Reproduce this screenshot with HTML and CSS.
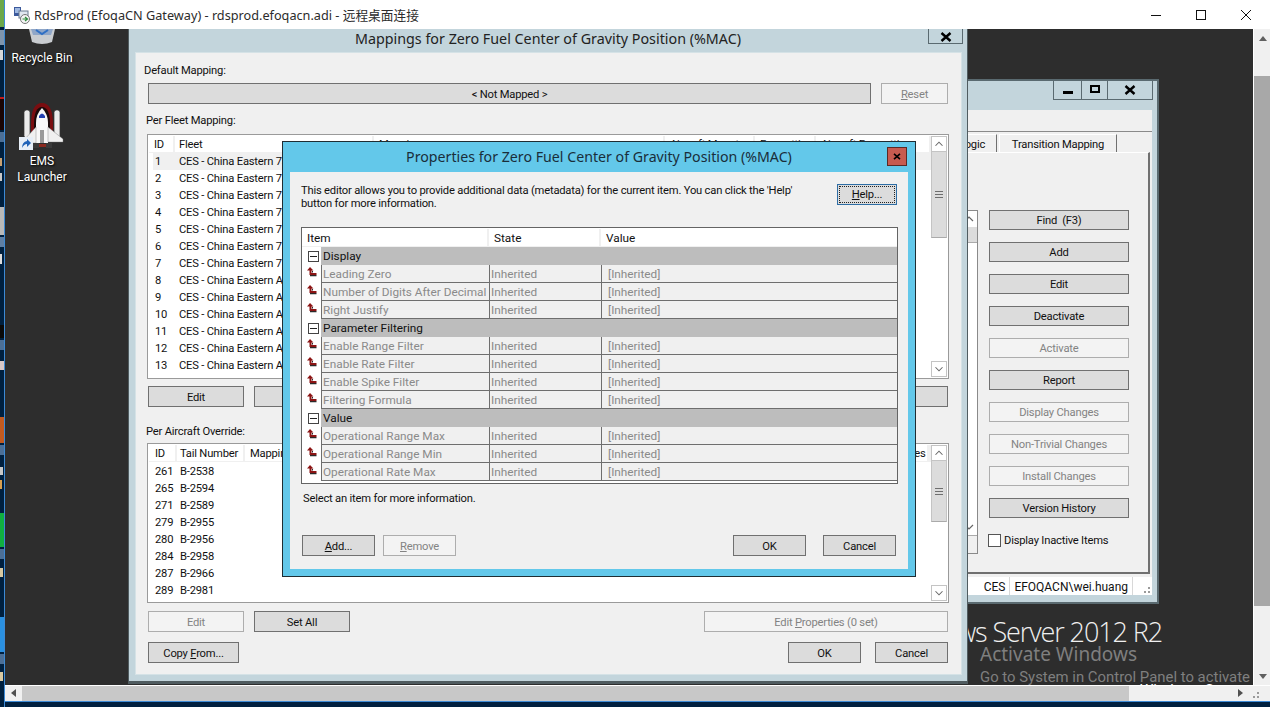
FILE: index.html
```html
<!DOCTYPE html>
<html lang="en">
<head>
    <meta charset="UTF-8">
    <title>RdsProd (EfoqaCN Gateway) - rdsprod.efoqacn.adi</title>
    <link rel="stylesheet" href="styles.css">
</head>
<body>
    <svg width="0" height="0" class="defs">
        <symbol id="inherit" viewBox="0 0 10 10">
            <path d="M3 0 L6.5 3.5 H4.5 V6 H9.5 V8 H2.5 V3.5 H0 Z" fill="#8c1414"/>
            <path d="M3 8 H9.5 V9.2 H3 Z M5 4 H6 V5.5 H5 Z" fill="#2a2a2a"/>
        </symbol>
        <symbol id="up" viewBox="0 0 16 16"><path d="M4 10 L8 6 L12 10" fill="none" stroke="#666" stroke-width="1.2"/></symbol>
        <symbol id="down" viewBox="0 0 16 16"><path d="M4 6 L8 10 L12 6" fill="none" stroke="#666" stroke-width="1.2"/></symbol>
        <symbol id="bigx" viewBox="0 0 12 10"><path d="M1.5 1 L10.5 9 M10.5 1 L1.5 9" stroke="#000" stroke-width="2.4"/></symbol>
    </svg>

    <svg class="edge" width="5" height="707" viewBox="0 0 5 707">
        <rect width="5" height="707" fill="#00203f"/>
        <rect y="0" width="4" height="27" fill="#6ca94a"/>
        <rect y="30" width="4" height="15" fill="#7f95ad"/>
        <rect y="50" width="3" height="10" fill="#d8d8d8"/>
        <rect y="97" width="4" height="33" fill="#1a0505"/>
        <rect y="97" width="4" height="2" fill="#c01818"/>
        <rect y="132" width="4" height="10" fill="#4c6f96"/>
        <rect y="158" width="2" height="8" fill="#c8a070"/>
        <rect y="173" width="2" height="8" fill="#c8c8c8"/>
        <rect y="207" width="4" height="28" fill="#b9b9b9"/>
        <rect y="237" width="4" height="10" fill="#5f7fa3"/>
        <rect y="254" width="2" height="10" fill="#dcdcdc"/>
        <rect y="325" width="4" height="13" fill="#0a0a0a"/>
        <rect y="340" width="4" height="10" fill="#4c6f96"/>
        <rect y="361" width="4" height="9" fill="#d8c8c8"/>
        <rect y="417" width="4" height="26" fill="#c25a20"/>
        <rect y="445" width="4" height="10" fill="#4c6f96"/>
        <rect y="467" width="3" height="8" fill="#c8c8c8"/>
        <rect y="480" width="2" height="9" fill="#d8a050"/>
        <rect y="513" width="4" height="34" fill="#10b040"/>
        <rect y="549" width="4" height="10" fill="#4c6f96"/>
        <rect y="568" width="3" height="9" fill="#d8c8a0"/>
        <rect y="617" width="4" height="35" fill="#2a90e0"/>
        <rect y="654" width="4" height="10" fill="#4c6f96"/>
        <rect y="672" width="3" height="9" fill="#d8c8a0"/>
        <rect x="4" y="0" width="1" height="707" fill="#3c8ad6"/>
    </svg>

    <div class="shell">
        <header class="rdp-title">
            <svg class="rdp-icon" width="18" height="18" viewBox="0 0 18 18">
                <rect x="1" y="1" width="7" height="9" fill="#3c5a9c"/>
                <rect x="2" y="2" width="5" height="5" fill="#9fb8e0"/>
                <rect x="6" y="5" width="9" height="7" fill="#dfe6ef" stroke="#6a7a90"/>
                <circle cx="12" cy="13" r="4.5" fill="#f4f4f4" stroke="#777"/>
                <path d="M9.5 13 H14.5 M12 11 L14.5 13 L12 15" fill="none" stroke="#2c8a3a" stroke-width="1.2"/>
            </svg>
            <span class="rdp-text">RdsProd (EfoqaCN Gateway) - rdsprod.efoqacn.adi - 远程桌面连接</span>
            <div class="rdp-controls">
                <svg width="12" height="12" viewBox="0 0 12 12"><path d="M1 6.5 H11" stroke="#111"/></svg>
                <svg width="12" height="12" viewBox="0 0 12 12"><rect x="1.5" y="1.5" width="9" height="9" fill="none" stroke="#111"/></svg>
                <svg width="12" height="12" viewBox="0 0 12 12"><path d="M1 1 L11 11 M11 1 L1 11" stroke="#111"/></svg>
            </div>
        </header>

        <div class="session">
            <main class="desktop">
                <div class="icon recycle">
                    <svg width="28" height="16" viewBox="0 0 28 16">
                        <path d="M1 0 H27 L24 13 Q14 17 4 13 Z" fill="#c9ccd0"/>
                        <path d="M3 0 H25 L23 6 H5 Z" fill="#8fa6c8"/>
                        <path d="M8 1 L14 5 L20 1" fill="none" stroke="#2f6fc4" stroke-width="2"/>
                    </svg>
                    <span>Recycle Bin</span>
                </div>
                <div class="icon ems">
                    <svg width="46" height="48" viewBox="0 0 46 48">
                        <path d="M12 22 Q12 0 23 0 Q34 0 34 22 V32 H12 Z" fill="#7a0d10"/>
                        <path d="M15 22 Q15 4 23 4 Q31 4 31 22 V32 H15 Z" fill="#1a0a0a"/>
                        <rect x="5" y="7" width="6" height="28" rx="2.5" fill="#ececec" stroke="#333" stroke-width=".7"/>
                        <rect x="35" y="7" width="6" height="28" rx="2.5" fill="#ececec" stroke="#333" stroke-width=".7"/>
                        <path d="M23 5 Q29 11 29 20 V40 H17 V20 Q17 11 23 5 Z" fill="#f8f8f8"/>
                        <path d="M20 13 Q23 8 26 13 V15 H20 Z" fill="#2340b0"/>
                        <path d="M17 24 L5 37 V40 H17 Z M29 24 L44 36 V39 H29 Z" fill="#f0f0f0" stroke="#777" stroke-width=".4"/>
                        <rect x="21" y="27" width="4" height="13" fill="#9a9a9a"/>
                        <path d="M14 40 H20 V45 H14 Z M27 40 H33 V45 H27 Z" fill="#3a3a3a"/>
                        <path d="M20 41 H27 V44 H20 Z" fill="#8a2a20"/>
                        <rect x="0" y="34" width="14" height="13" fill="#e6eef7"/>
                        <path d="M3 45 Q3 39 8 38 V36 L12 40 L8 44 V41 Q5 41 3 45 Z" fill="#1f62b8"/>
                    </svg>
                    <span>EMS<br>Launcher</span>
                </div>

                <div class="watermark">
                    <div class="server-name">Windows Server 2012 R2</div>
                    <div class="activate">Activate Windows</div>
                    <div class="activate-hint">Go to System in Control Panel to activate Windows.</div>
                    <div class="build">Windows Server</div>
                </div>

                <section class="window back-window">
                    <div class="back-caption">
                        <div class="caption-box">
                            <span class="cap-btn cap-min"><i></i></span>
                            <span class="cap-btn cap-max"><i></i></span>
                            <span class="cap-btn cap-close"><svg width="12" height="10"><use href="#bigx"/></svg></span>
                        </div>
                    </div>
                    <div class="back-client">
                        <div class="tabs">
                            <span class="tab tab-logic">Logic</span>
                            <span class="tab tab-transition">Transition Mapping</span>
                        </div>
                        <div class="tab-panel">
                            <div class="back-list">
                                <span class="back-arrow"><svg width="16" height="16"><use href="#up"/></svg></span>
                                <span class="back-thumb"></span>
                                <span class="back-arrow back-arrow-down"><svg width="16" height="16"><use href="#down"/></svg></span>
                                <span class="back-foot"></span>
                            </div>
                            <div class="back-actions">
                                <button class="btn tall">Find&nbsp; (F3)</button>
                                <button class="btn tall">Add</button>
                                <button class="btn tall">Edit</button>
                                <button class="btn tall">Deactivate</button>
                                <button class="btn tall off">Activate</button>
                                <button class="btn tall">Report</button>
                                <button class="btn tall off">Display Changes</button>
                                <button class="btn tall off">Non-Trivial Changes</button>
                                <button class="btn tall off">Install Changes</button>
                                <button class="btn tall">Version History</button>
                                <label class="check"><i></i>Display Inactive Items</label>
                            </div>
                        </div>
                        <div class="status-bar">
                            <span class="status-cell">CES</span>
                            <span class="status-cell">EFOQACN\wei.huang</span>
                            <span class="grip"></span>
                        </div>
                    </div>
                </section>

                <section class="window main-window">
                    <div class="main-caption">Mappings for Zero Fuel Center of Gravity Position (%MAC)</div>
                    <span class="main-close"><svg width="12" height="10"><use href="#bigx"/></svg></span>
                    <div class="main-client">
                        <div class="label label-default">Default Mapping:</div>
                        <div class="btn-row first-row">
                            <button class="btn mapped">&lt; Not Mapped &gt;</button>
                            <button class="btn off reset"><u>R</u>eset</button>
                        </div>
                        <div class="label label-fleet">Per Fleet Mapping:</div>
                        <div class="list fleet-list">
                            <div class="list-main">
                                <div class="list-head">
                                    <span class="th fl-id">ID</span>
                                    <span class="th fl-name">Fleet</span>
                                    <span class="th fl-map">Mapping</span>
                                    <span class="th fl-mount">Aircraft Mount</span>
                                    <span class="th fl-fmt">Formatting</span>
                                    <span class="th fl-afmt">Aircraft Formatting</span>
                                </div>
                                <div class="list-row selected"><span class="fl-id">1</span><span class="fl-name">CES - China Eastern 737-700</span></div>
                                <div class="list-row"><span class="fl-id">2</span><span class="fl-name">CES - China Eastern 737-700</span></div>
                                <div class="list-row"><span class="fl-id">3</span><span class="fl-name">CES - China Eastern 737-800</span></div>
                                <div class="list-row"><span class="fl-id">4</span><span class="fl-name">CES - China Eastern 737-800</span></div>
                                <div class="list-row"><span class="fl-id">5</span><span class="fl-name">CES - China Eastern 737-800</span></div>
                                <div class="list-row"><span class="fl-id">6</span><span class="fl-name">CES - China Eastern 737-800</span></div>
                                <div class="list-row"><span class="fl-id">7</span><span class="fl-name">CES - China Eastern 777-300</span></div>
                                <div class="list-row"><span class="fl-id">8</span><span class="fl-name">CES - China Eastern A319</span></div>
                                <div class="list-row"><span class="fl-id">9</span><span class="fl-name">CES - China Eastern A320</span></div>
                                <div class="list-row"><span class="fl-id">10</span><span class="fl-name">CES - China Eastern A320</span></div>
                                <div class="list-row"><span class="fl-id">11</span><span class="fl-name">CES - China Eastern A321</span></div>
                                <div class="list-row"><span class="fl-id">12</span><span class="fl-name">CES - China Eastern A330</span></div>
                                <div class="list-row"><span class="fl-id">13</span><span class="fl-name">CES - China Eastern A340</span></div>
                            </div>
                            <div class="vbar">
                                <span class="vbar-btn"><svg width="16" height="16"><use href="#up"/></svg></span>
                                <span class="vbar-thumb thumb-fleet"><i></i></span>
                                <span class="vbar-btn vbar-end"><svg width="16" height="16"><use href="#down"/></svg></span>
                            </div>
                        </div>
                        <div class="btn-row fleet-actions">
                            <button class="btn wide">Edit</button>
                            <button class="btn wide">Set All</button>
                            <button class="btn props">Edit Properties (13 set)</button>
                        </div>
                        <div class="label label-aircraft">Per Aircraft Override:</div>
                        <div class="list aircraft-list">
                            <div class="list-main">
                                <div class="list-head">
                                    <span class="th ac-id">ID</span>
                                    <span class="th ac-tail">Tail Number</span>
                                    <span class="th ac-map">Mapping</span>
                                    <span class="th ac-props">Properties</span>
                                </div>
                                <div class="list-row"><span class="ac-id">261</span><span class="ac-tail">B-2538</span></div>
                                <div class="list-row"><span class="ac-id">265</span><span class="ac-tail">B-2594</span></div>
                                <div class="list-row"><span class="ac-id">271</span><span class="ac-tail">B-2589</span></div>
                                <div class="list-row"><span class="ac-id">279</span><span class="ac-tail">B-2955</span></div>
                                <div class="list-row"><span class="ac-id">280</span><span class="ac-tail">B-2956</span></div>
                                <div class="list-row"><span class="ac-id">284</span><span class="ac-tail">B-2958</span></div>
                                <div class="list-row"><span class="ac-id">287</span><span class="ac-tail">B-2966</span></div>
                                <div class="list-row"><span class="ac-id">289</span><span class="ac-tail">B-2981</span></div>
                            </div>
                            <div class="vbar">
                                <span class="vbar-btn"><svg width="16" height="16"><use href="#up"/></svg></span>
                                <span class="vbar-thumb thumb-aircraft"><i></i></span>
                                <span class="vbar-btn vbar-end"><svg width="16" height="16"><use href="#down"/></svg></span>
                            </div>
                        </div>
                        <div class="btn-row aircraft-actions">
                            <button class="btn wide off">Edit</button>
                            <button class="btn wide">Set All</button>
                            <button class="btn props off">Edit <u>P</u>roperties (0 set)</button>
                        </div>
                        <div class="btn-row main-footer">
                            <button class="btn copy">Copy <u>F</u>rom...</button>
                            <button class="btn std ok">OK</button>
                            <button class="btn std">Cancel</button>
                        </div>
                    </div>
                </section>

                <section class="window dialog">
                    <div class="dialog-caption">Properties for Zero Fuel Center of Gravity Position (%MAC)</div>
                    <span class="dialog-close"><svg width="8" height="7"><use href="#bigx"/></svg></span>
                    <div class="dialog-client">
                        <div class="dialog-intro">
                            <p>This editor allows you to provide additional data (metadata) for the current item. You can click the 'Help' button for more information.</p>
                            <button class="btn help"><span><u>H</u>elp...</span></button>
                        </div>
                        <div class="prop-table">
                            <div class="prop-head"><span>Item</span><span>State</span><span>Value</span></div>
                            <div class="prop-group"><span class="expander"></span><span class="group-name">Display</span></div>
                            <div class="prop-row"><svg class="inherit" width="10" height="10"><use href="#inherit"/></svg><span>Leading Zero</span><span>Inherited</span><span class="val">[Inherited]</span></div>
                            <div class="prop-row"><svg class="inherit" width="10" height="10"><use href="#inherit"/></svg><span>Number of Digits After Decimal</span><span>Inherited</span><span class="val">[Inherited]</span></div>
                            <div class="prop-row"><svg class="inherit" width="10" height="10"><use href="#inherit"/></svg><span>Right Justify</span><span>Inherited</span><span class="val">[Inherited]</span></div>
                            <div class="prop-group"><span class="expander"></span><span class="group-name">Parameter Filtering</span></div>
                            <div class="prop-row"><svg class="inherit" width="10" height="10"><use href="#inherit"/></svg><span>Enable Range Filter</span><span>Inherited</span><span class="val">[Inherited]</span></div>
                            <div class="prop-row"><svg class="inherit" width="10" height="10"><use href="#inherit"/></svg><span>Enable Rate Filter</span><span>Inherited</span><span class="val">[Inherited]</span></div>
                            <div class="prop-row"><svg class="inherit" width="10" height="10"><use href="#inherit"/></svg><span>Enable Spike Filter</span><span>Inherited</span><span class="val">[Inherited]</span></div>
                            <div class="prop-row"><svg class="inherit" width="10" height="10"><use href="#inherit"/></svg><span>Filtering Formula</span><span>Inherited</span><span class="val">[Inherited]</span></div>
                            <div class="prop-group"><span class="expander"></span><span class="group-name">Value</span></div>
                            <div class="prop-row"><svg class="inherit" width="10" height="10"><use href="#inherit"/></svg><span>Operational Range Max</span><span>Inherited</span><span class="val">[Inherited]</span></div>
                            <div class="prop-row"><svg class="inherit" width="10" height="10"><use href="#inherit"/></svg><span>Operational Range Min</span><span>Inherited</span><span class="val">[Inherited]</span></div>
                            <div class="prop-row"><svg class="inherit" width="10" height="10"><use href="#inherit"/></svg><span>Operational Rate Max</span><span>Inherited</span><span class="val">[Inherited]</span></div>
                        </div>
                        <div class="dialog-hint">Select an item for more information.</div>
                        <div class="btn-row dialog-actions">
                            <button class="btn std"><u>A</u>dd...</button>
                            <button class="btn std off"><u>R</u>emove</button>
                            <button class="btn std ok">OK</button>
                            <button class="btn std">Cancel</button>
                        </div>
                    </div>
                </section>
            </main>

            <div class="page-vbar">
                <span class="page-up"></span>
                <span class="page-thumb"></span>
                <span class="page-down"></span>
            </div>
        </div>

        <div class="page-hbar">
            <span class="page-left"></span>
            <span class="page-hthumb"></span>
            <span class="page-right"></span>
            <span class="grip page-grip"></span>
        </div>
        <div class="footbar"></div>
    </div>
</body>
</html>
```

FILE: styles.css
```css
* {
    box-sizing: border-box;
}
html, body {
    margin: 0;
    height: 707px;
    overflow: hidden;
}
body {
    display: flex;
    width: 1270px;
    font-family: Roboto, "Noto Sans CJK SC", sans-serif;
    font-size: 11.2px;
    letter-spacing: -0.2px;
    color: #111;
    background: #00203f;
}
.defs {
    position: absolute;
}
.edge {
    flex: none;
    display: block;
}
.shell {
    flex: 1;
    min-width: 0;
    display: flex;
    flex-direction: column;
}

/* remote desktop client chrome */
.rdp-title {
    height: 29px;
    flex: none;
    display: flex;
    align-items: center;
    background: #fff;
    padding-left: 8px;
}
.rdp-icon {
    margin-right: 3px;
}
.rdp-text {
    font-family: "Noto Sans", "Noto Sans CJK SC", sans-serif;
    font-size: 12.7px;
    letter-spacing: 0;
    color: #2c2c2c;
}
.rdp-controls {
    margin-left: auto;
    display: flex;
    gap: 33px;
    padding-right: 18px;
}
.session {
    height: 656px;
    flex: none;
    display: flex;
}
.desktop {
    position: relative;
    width: 1248px;
    overflow: hidden;
    background: #2d2d2d;
}
.page-vbar {
    flex: 1;
    display: flex;
    flex-direction: column;
    background: #f0f0f0;
    border-left: 1px solid #fff;
}
.page-up {
    height: 47px;
    position: relative;
}
.page-up::after {
    content: "";
    position: absolute;
    left: 5px;
    top: 7px;
    border: 4px solid transparent;
    border-top: 0;
    border-bottom: 5px solid #606060;
}
.page-thumb {
    height: 530px;
    background: #a8a8a8;
}
.page-down {
    flex: 1;
    position: relative;
}
.page-down::after {
    content: "";
    position: absolute;
    left: 5px;
    bottom: 6px;
    border: 4px solid transparent;
    border-bottom: 0;
    border-top: 5px solid #606060;
}
.page-hbar {
    height: 16px;
    flex: none;
    display: flex;
    align-items: stretch;
    background: #f0f0f0;
    border-top: 1px solid #fff;
}
.page-left {
    width: 17px;
    position: relative;
}
.page-left::after {
    content: "";
    position: absolute;
    left: 6px;
    top: 3px;
    border: 4px solid transparent;
    border-left: 0;
    border-right: 5px solid #505050;
}
.page-hthumb {
    width: 1107px;
    background: #c8c8c8;
}
.page-right {
    width: 120px;
    position: relative;
}
.page-right::after {
    content: "";
    position: absolute;
    right: 6px;
    top: 3px;
    border: 4px solid transparent;
    border-right: 0;
    border-left: 5px solid #505050;
}
.grip {
    display: block;
    width: 12px;
    height: 12px;
    background: radial-gradient(circle at 1px 1px, #9a9a9a 1px, transparent 1px) 0 0 / 4px 4px;
    clip-path: polygon(100% 0, 100% 100%, 0 100%);
}
.page-grip {
    margin: 2px 2px 0 0;
}
.footbar {
    flex: 1;
    background: #00203f;
    border-top: 1px solid #3c8ad6;
}

/* desktop items */
.icon {
    position: absolute;
    width: 74px;
    display: flex;
    flex-direction: column;
    align-items: center;
    color: #fff;
    font-size: 12px;
    letter-spacing: 0;
    line-height: 16px;
    text-align: center;
    text-shadow: 1px 1px 2px #000;
}
.recycle {
    left: 0;
    top: 0;
}
.recycle span {
    margin-top: 5px;
}
.ems {
    left: 0;
    top: 74px;
}
.ems span {
    margin-top: 2px;
}
.watermark {
    position: absolute;
    left: 740px;
    top: 580px;
    width: 508px;
    height: 76px;
    letter-spacing: 0;
    white-space: nowrap;
}
.server-name {
    position: absolute;
    right: 91px;
    top: 5px;
    font-family: "Open Sans", sans-serif;
    font-weight: 300;
    font-size: 27px;
    letter-spacing: -1.1px;
    line-height: 36px;
    color: #f0f0f0;
}
.activate {
    position: absolute;
    left: 235px;
    top: 33px;
    font-family: "Noto Sans", sans-serif;
    font-size: 19px;
    line-height: 24px;
    color: #7f7f7f;
}
.activate-hint {
    position: absolute;
    left: 235px;
    top: 57px;
    font-size: 14.9px;
    line-height: 22px;
    color: #7f7f7f;
}
.build {
    position: absolute;
    left: 395px;
    top: 71px;
    font-size: 15px;
    line-height: 20px;
    color: #fff;
}

/* windows */
.window {
    position: absolute;
}
.btn {
    height: 21px;
    padding: 2px 0 0;
    font: inherit;
    letter-spacing: inherit;
    color: #111;
    background: #dcdcdc;
    border: 1px solid #707070;
    border-radius: 0;
}
.btn.off {
    color: #838383;
    background: #f3f3f3;
    border-color: #adadad;
}
.btn-row {
    display: flex;
    flex: none;
}
.label {
    height: 16px;
    line-height: 18px;
    flex: none;
}

/* window behind */
.back-window {
    left: 795px;
    top: 50px;
    width: 359px;
    height: 525px;
    background: #c3d5dc;
    border: 2px solid #5a6a70;
    border-left: 0;
    display: flex;
    flex-direction: column;
}
.back-caption {
    height: 29px;
    flex: none;
    display: flex;
    justify-content: flex-end;
    padding-right: 4px;
}
.caption-box {
    display: flex;
    height: 21px;
    margin-top: -2px;
    border: 1px solid #5a6a70;
}
.cap-btn {
    display: flex;
    align-items: center;
    justify-content: center;
    border-right: 1px solid #5a6a70;
}
.cap-min {
    width: 28px;
}
.cap-min i {
    width: 10px;
    height: 3px;
    margin-top: 5px;
    background: #000;
}
.cap-max {
    width: 26px;
}
.cap-max i {
    width: 10px;
    height: 8px;
    margin-top: -2px;
    border: 2px solid #000;
}
.cap-close {
    width: 44px;
    border-right: 0;
}
.back-client {
    margin-right: 5px;
    height: 485px;
    flex: none;
    background: #f0f0f0;
    display: flex;
    flex-direction: column;
}
.tabs {
    height: 42px;
    flex: none;
    display: flex;
    justify-content: flex-end;
    align-items: flex-end;
    gap: 2px;
    padding-right: 35px;
    background: linear-gradient(#f0f0f0 21px, #8a8a8a 21px, #8a8a8a 22px, #f0f0f0 22px);
}
.tab {
    height: 18px;
    line-height: 19px;
    text-align: center;
    border-top: 1px solid #fff;
    border-left: 1px solid #fff;
    border-right: 1px solid #707070;
}
.tab-logic {
    width: 100px;
    padding-left: 50px;
}
.tab-transition {
    width: 118px;
}
.tab-panel {
    height: 422px;
    flex: none;
    display: flex;
    justify-content: flex-end;
    gap: 11px;
    padding: 57px 19px 0 0;
    margin-right: 2px;
    border-top: 1px solid #fff;
    border-right: 2px solid #707070;
    border-bottom: 2px solid #707070;
}
.back-list {
    width: 40px;
    height: 344px;
    display: flex;
    flex-direction: column;
    align-items: flex-end;
    background: #fff;
    border: 1px solid #8a8a8a;
    border-left: 0;
}
.back-arrow {
    width: 16px;
    height: 16px;
    display: block;
}
.back-thumb {
    width: 40px;
    height: 16px;
    background: #dcdcdc;
    border-bottom: 1px solid #aaa;
}
.back-arrow-down {
    margin-top: auto;
}
.back-foot {
    width: 40px;
    height: 18px;
    background: #f0f0f0;
    border-top: 1px solid #aaa;
}
.back-actions {
    width: 140px;
    display: flex;
    flex-direction: column;
    gap: 12px;
}
.btn.tall {
    height: 20px;
    padding: 0;
    flex: none;
}
.check {
    display: flex;
    align-items: center;
    height: 14px;
    margin: 3px 0 0 -1px;
}
.check i {
    width: 13px;
    height: 13px;
    margin-right: 3px;
    background: #fff;
    border: 1px solid #555;
}
.status-bar {
    height: 18px;
    margin-top: 3px;
    flex: none;
    display: flex;
    justify-content: flex-end;
    align-items: center;
    background: #fff;
    position: relative;
    font-size: 12px;
    letter-spacing: 0;
}
.status-cell {
    padding: 0 4px;
    line-height: 20px;
    height: 18px;
    border-right: 1px solid #d8d8d8;
}
.status-bar .grip {
    margin: 6px 0 0 7px;
}

/* mappings window */
.main-window {
    left: 123px;
    top: -3px;
    width: 840px;
    height: 658px;
    background: #c3d5dc;
    border: 1px solid #505c60;
    border-bottom-width: 3px;
    display: flex;
    flex-direction: column;
}
.main-caption {
    height: 26px;
    flex: none;
    text-align: center;
    font-family: "Noto Sans", sans-serif;
    font-size: 14.3px;
    letter-spacing: 0;
    line-height: 24px;
    color: #222;
}
.main-close {
    position: absolute;
    right: 4px;
    top: -1px;
    width: 35px;
    height: 18px;
    display: flex;
    align-items: center;
    justify-content: center;
    padding-top: 3px;
    border: 1px solid #5a6a70;
}
.main-client {
    flex: 1;
    margin: 0 6px 7px 7px;
    padding: 0 13px 0 12px;
    background: #f0f0f0;
    outline: 1px solid #d5e2e6;
    display: flex;
    flex-direction: column;
}
.label-default {
    margin: 9px 0 0 -4px;
}
.first-row {
    margin-top: 5px;
    gap: 10px;
}
.mapped {
    width: 723px;
}
.reset {
    width: 67px;
}
.label-fleet {
    margin: 8px 0 0 -2px;
}
.list {
    flex: none;
    display: flex;
    margin: 6px -1px 0;
    background: #fff;
    border: 1px solid #9a9a9a;
}
.fleet-list {
    height: 245px;
}
.aircraft-list {
    height: 160px;
    margin-top: 4px;
}
.aircraft-list .list-row {
    line-height: 19px;
}
.list-main {
    flex: 1;
    min-width: 0;
    overflow: hidden;
    padding: 1px 0 0 1px;
}
.list-head {
    height: 17px;
    display: flex;
    white-space: nowrap;
    background: #f0f0f0;
}
.th {
    height: 16px;
    line-height: 18px;
    margin-right: 2px;
    padding-left: 5px;
    background: #fff;
    flex: none;
}
.list-row {
    height: 17px;
    display: flex;
    line-height: 17px;
    white-space: nowrap;
}
.list-row.selected {
    margin-left: 4px;
    background: #f0f0f0;
}
.list-row.selected .fl-id {
    margin-left: -4px;
    padding-left: 6px;
}
.list-row .fl-id {
    padding-left: 6px;
}
.fl-id {
    width: 24px;
    flex: none;
}
.fl-name {
    width: 197px;
    flex: none;
    padding-left: 4px;
}
.th.fl-name {
    padding-left: 4px;
}
.list-row .fl-id + .fl-name {
    margin-left: 2px;
}
.fl-map {
    width: 289px;
}
.fl-mount {
    width: 88px;
}
.fl-fmt {
    width: 59px;
}
.fl-afmt {
    width: 113px;
}
.ac-id {
    width: 26px;
    flex: none;
    padding-left: 6px;
}
.ac-tail {
    width: 66px;
    flex: none;
    padding-left: 3px;
}
.th.ac-tail {
    padding-left: 3px;
}
.list-row .ac-id + .ac-tail {
    margin-left: 2px;
}
.ac-map {
    width: 560px;
}
.ac-props {
    width: 120px;
    padding-left: 69px;
}
.vbar {
    width: 17px;
    flex: none;
    display: flex;
    flex-direction: column;
    padding-top: 1px;
}
.vbar-btn {
    height: 16px;
    width: 16px;
    flex: none;
    border: 1px solid #c4c4c4;
    display: flex;
    align-items: center;
    justify-content: center;
}
.vbar-thumb {
    width: 16px;
    flex: none;
    background: #dcdcdc;
    border-bottom: 1px solid #aaa;
    border-left: 1px solid #c4c4c4;
    border-right: 1px solid #c4c4c4;
    display: flex;
    align-items: center;
    justify-content: center;
}
.vbar-thumb i {
    width: 8px;
    height: 7px;
    background: repeating-linear-gradient(#6e6e6e 0 1px, transparent 1px 3px);
}
.thumb-fleet {
    height: 86px;
}
.thumb-aircraft {
    height: 61px;
}
.vbar-end {
    margin: auto 0 1px;
}
.fleet-actions {
    margin-top: 7px;
    gap: 10px;
}
.wide {
    width: 96px;
}
.props {
    width: 244px;
    margin-left: auto;
}
.label-aircraft {
    margin: 16px 0 0 -2px;
}
.aircraft-actions {
    margin-top: 8px;
    gap: 10px;
}
.main-footer {
    margin-top: 10px;
    gap: 14px;
}
.copy {
    width: 91px;
}
.std {
    width: 73px;
}
.ok {
    margin-left: auto;
}

/* properties dialog */
.dialog {
    left: 277px;
    top: 112px;
    width: 634px;
    height: 436px;
    background: #63c8ea;
    border: 1px solid #1f2d33;
    display: flex;
    flex-direction: column;
}
.dialog-caption {
    height: 30px;
    flex: none;
    text-align: center;
    font-family: "Noto Sans", sans-serif;
    font-size: 14.2px;
    letter-spacing: 0;
    line-height: 29px;
    color: #1a2e3a;
}
.dialog-close {
    position: absolute;
    right: 8px;
    top: 5px;
    width: 20px;
    height: 19px;
    display: flex;
    align-items: center;
    justify-content: center;
    background: #c75b50;
    border: 1px solid #5a2a26;
}
.dialog-client {
    flex: 1;
    margin: 0 7px 7px;
    padding: 0 10px 0 11px;
    background: #f0f0f0;
    display: flex;
    flex-direction: column;
}
.dialog-intro {
    display: flex;
    justify-content: space-between;
    padding-top: 12px;
    height: 55px;
    flex: none;
}
.dialog-intro p {
    margin: 0;
    width: 510px;
    line-height: 13px;
}
.help {
    width: 60px;
    height: 21px;
    margin: 0 1px 0 0;
    border-color: #2f6ea5;
    padding: 1px;
}
.help span {
    display: block;
    height: 100%;
    line-height: 15px;
    border: 1px dotted #222;
}
.prop-table {
    height: 257px;
    flex: none;
    background: #fff;
    border: 1px solid #646464;
    padding-top: 1px;
    font-size: 11.8px;
    letter-spacing: 0;
}
.prop-head,
.prop-row,
.prop-group {
    display: grid;
    grid-template-columns: 19px 168px 112px 1fr;
    height: 18px;
    white-space: nowrap;
}
.prop-head {
    grid-template-columns: 187px 112px 1fr;
    background: #f0f0f0;
    line-height: 19px;
}
.prop-head span {
    padding-left: 5px;
    height: 17px;
    background: #fff;
    margin-right: 2px;
}
.prop-head span:last-child {
    margin-right: 0;
}
.prop-group {
    grid-template-columns: 19px 1fr;
}
.expander {
    position: relative;
    width: 11px;
    height: 11px;
    margin: 4px 0 0 6px;
    background: #fff;
    border: 1px solid #444;
}
.expander::after {
    content: "";
    position: absolute;
    left: 1px;
    right: 1px;
    top: 4px;
    height: 1px;
    background: #222;
}
.group-name {
    line-height: 19px;
    padding-left: 2px;
    background: #bdbdbd;
    border-bottom: 1px solid #111;
}
.prop-row span {
    line-height: 19px;
    padding-left: 1px;
    color: #8a8a8a;
    background: #f0f0f0;
    border-left: 1px solid #6e6e6e;
    border-bottom: 1px solid #6e6e6e;
    overflow: hidden;
}
.prop-row .val {
    padding-left: 6px;
}
.inherit {
    margin: 2px 0 0 5px;
}
.dialog-hint {
    height: 16px;
    margin-top: 6px;
    padding-left: 2px;
    line-height: 18px;
    flex: none;
}
.dialog-actions {
    margin-top: 29px;
    padding: 0 2px 0 1px;
}
.dialog-actions .off {
    margin-left: 8px;
}
.dialog-actions .ok {
    margin-right: 17px;
}
```
